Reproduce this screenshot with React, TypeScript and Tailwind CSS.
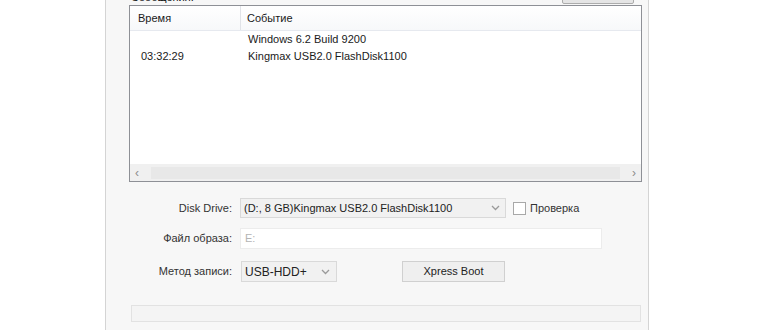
import React from "react";

function Chevron() {
  return (
    <svg width="9" height="6" viewBox="0 0 9 6" className="shrink-0">
      <path d="M1 1 L4.5 4.5 L8 1" fill="none" stroke="#9a9a9a" strokeWidth="1.3" />
    </svg>
  );
}

export default function App() {
  return (
    <div
      className="w-[770px] h-[330px] bg-white overflow-hidden text-[11px] text-[#1a1a1a]"
      style={{ fontFamily: '"Liberation Sans", Arial, sans-serif' }}
    >
      <div className="ml-[105px] w-[544px] h-[330px] border-l border-r border-[#d4d4d4] bg-[#f7f7f7] pl-[23px] pr-[6px] flex flex-col">
        {/* cut-off title row */}
        <div className="flex items-end h-[5px] -mt-[1px]">
          <div className="h-[15px] flex items-end">
            <span className="ml-[2px] leading-[13px] text-[#111]">Сообщения:</span>
          </div>
          <div className="ml-auto mr-[8px] w-[72px] h-[15px] border border-[#acacac] bg-[#e5e5e5] rounded-[2px]" />
        </div>

        {/* message list */}
        <div className="mt-[1px] w-[513px] h-[177px] border border-[#8e9096] bg-white flex flex-col">
          <div className="h-[25px] flex items-center border-b border-[#e6e9ef] bg-gradient-to-b from-white to-[#f7f8fa]">
            <div className="w-[111px] h-full flex items-center pl-[8px] border-r border-[#e1e3e8]">Время</div>
            <div className="pl-[6px]">Событие</div>
          </div>
          <div className="flex flex-col">
            <div className="h-[17px] flex items-center">
              <div className="w-[111px]" />
              <div className="pl-[7px]">Windows 6.2 Build 9200</div>
            </div>
            <div className="h-[17px] flex items-center">
              <div className="w-[111px] pl-[11px]">03:32:29</div>
              <div className="pl-[7px]">Kingmax USB2.0 FlashDisk1100</div>
            </div>
          </div>
          <div className="mt-auto h-[17px] flex items-center bg-[#f0f0f0] px-[5px]">
            <span className="text-[#8c8c8c] text-[12px] leading-none w-[12px]">‹</span>
            <div className="flex-1 h-[12px] mx-[4px] bg-[#e8e8e8]" />
            <span className="text-[#8c8c8c] text-[12px] leading-none w-[12px] text-right">›</span>
          </div>
        </div>

        {/* form */}
        <div className="mt-[16px] flex flex-col">
          <div className="flex items-center h-[20px]">
            <div className="w-[104px] text-right text-[#333] pr-[1px]">Disk Drive:</div>
            <div className="ml-[7px] w-[266px] h-[20px] border border-[#d9d9d9] bg-[#f1f1f1] flex items-center pl-[3px] pr-[5px]">
              <span className="flex-1 text-[#222]">(D:, 8 GB)Kingmax USB2.0 FlashDisk1100</span>
              <Chevron />
            </div>
            <div className="ml-[7px] w-[13px] h-[13px] border border-[#a8a8a8] bg-white" />
            <span className="ml-[4px] text-[#333]">Проверка</span>
          </div>

          <div className="mt-[10px] flex items-center h-[21px]">
            <div className="w-[104px] text-right text-[#333] pr-[1px]">Файл образа:</div>
            <div className="ml-[7px] w-[362px] h-[21px] border border-[#ececec] bg-white flex items-center pl-[4px] text-[#b4b4b4]">
              E:
            </div>
          </div>

          <div className="mt-[12px] flex items-center h-[21px]">
            <div className="w-[104px] text-right text-[#333] pr-[1px]">Метод записи:</div>
            <div className="ml-[8px] w-[96px] h-[21px] border border-[#d9d9d9] bg-[#f1f1f1] flex items-center pl-[3px] pr-[6px]">
              <span className="flex-1 text-[12px] text-[#222]">USB-HDD+</span>
              <Chevron />
            </div>
            <div className="ml-[65px] w-[103px] h-[21px] border border-[#d0d0d0] bg-[#efefef] flex items-center justify-center text-[#222]">
              Xpress Boot
            </div>
          </div>

          <div className="mt-[23px] ml-[2px] w-[510px] h-[17px] border border-[#e2e2e2] bg-[#f4f4f4]" />
        </div>
      </div>
    </div>
  );
}
